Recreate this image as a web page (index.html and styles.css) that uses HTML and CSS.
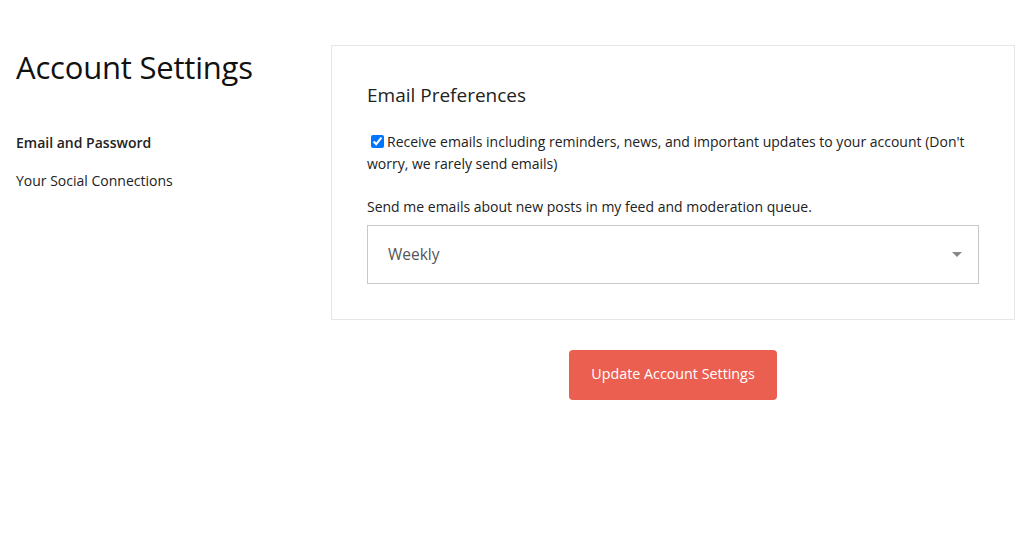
FILE: index.html
```html
<!DOCTYPE html>
<html>
<head>
<meta charset="utf-8">
<link rel="stylesheet" href="styles.css">
</head>
<body>
<div class="page">
  <aside class="sidebar">
    <h1 class="title">Account Settings</h1>
    <nav class="nav">
      <a class="nav-link active">Email and Password</a>
      <a class="nav-link">Your Social Connections</a>
    </nav>
  </aside>
  <main class="main">
    <section class="card">
      <h2 class="card-title">Email Preferences</h2>
      <label class="check-row">
        <input type="checkbox" class="check" checked>Receive emails including reminders, news, and important updates to your account (Don't worry, we rarely send emails)
      </label>
      <p class="label">Send me emails about new posts in my feed and moderation queue.</p>
      <div class="select">
        <span class="select-value">Weekly</span>
        <span class="caret"></span>
      </div>
    </section>
    <div class="actions">
      <button class="btn">Update Account Settings</button>
    </div>
  </main>
</div>
</body>
</html>
```
FILE: styles.css
```css
* { box-sizing: border-box; }
body {
  margin: 0;
  font-family: "Open Sans", "Liberation Sans", sans-serif;
  color: #222;
  background: #fff;
}
.page {
  display: grid;
  grid-template-columns: 315px 684px;
  padding: 45px 18px 0 16px;
}
.title {
  margin: 4px 0 0;
  font-size: 31px;
  font-weight: 400;
  line-height: 36px;
  letter-spacing: -0.2px;
  color: #111;
}
.nav {
  display: flex;
  flex-direction: column;
  gap: 16px;
  margin-top: 47px;
}
.nav-link {
  font-size: 14px;
  line-height: 22px;
  color: #222;
}
.nav-link.active { font-weight: 600; }
.card {
  border: 1px solid #e4e6ea;
  padding: 35px 35px 35px 35px;
}
.card-title {
  margin: 0;
  font-size: 19px;
  font-weight: 400;
  line-height: 29px;
  color: #222;
}
.check-row {
  display: block;
  margin-top: 21px;
  font-size: 14px;
  line-height: 22px;
  color: #222;
}
.check {
  margin: 0 3px 0 4px;
  width: 13px;
  height: 13px;
  vertical-align: -1px;
}
.label {
  margin: 21px 0 0;
  font-size: 14px;
  line-height: 22px;
}
.select {
  margin-top: 7px;
  height: 59px;
  border: 1px solid #c8c8c8;
  display: flex;
  align-items: center;
  justify-content: space-between;
  padding: 0 16px 2px 20px;
}
.select-value {
  font-size: 15.5px;
  color: #555;
}
.caret {
  width: 0;
  height: 0;
  margin-top: 2px;
  border-left: 5px solid transparent;
  border-right: 5px solid transparent;
  border-top: 5px solid #888;
}
.actions {
  display: flex;
  justify-content: center;
  margin-top: 30px;
}
.btn {
  width: 208px;
  height: 50px;
  padding: 0 0 3px;
  border: 0;
  border-radius: 4px;
  background: #eb5f50;
  color: #fff;
  font-family: inherit;
  font-size: 14.3px;
}
```
